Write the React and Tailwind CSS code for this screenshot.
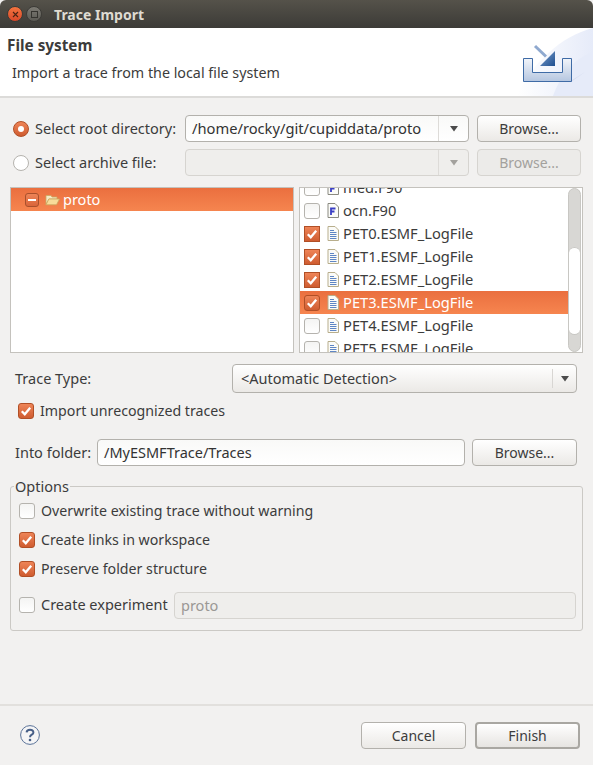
import React from 'react'

const FONT = { fontFamily: '"Noto Sans", sans-serif' }

function Tick() {
    return (
        <svg viewBox="0 0 16 16" className="w-4 h-4">
            <path d="M3.2 8.2 L6.6 11.8 L12.8 4.2" fill="none" stroke="#fff" strokeWidth="2.6" />
        </svg>
    )
}

function Check({ on, square }) {
    if (on) {
        return (
            <div className={`w-4 h-4 shrink-0 flex items-center justify-center border border-[#b14f26] bg-gradient-to-b from-[#ee8457] to-[#cf5c30] ${square ? 'rounded-none' : 'rounded-[3px]'}`}>
                <Tick />
            </div>
        )
    }
    return <div className="w-4 h-4 shrink-0 rounded-[3px] border border-[#b5b3ae] bg-gradient-to-b from-[#f4f4f3] to-white" />
}

function Radio({ on }) {
    if (on) {
        return (
            <div className="w-4 h-4 shrink-0 rounded-full border border-[#b14f26] bg-gradient-to-b from-[#ee8457] to-[#cf5c30] flex items-center justify-center">
                <div className="w-[6px] h-[6px] rounded-full bg-white" />
            </div>
        )
    }
    return <div className="w-4 h-4 shrink-0 rounded-full border border-[#b5b3ae] bg-white" />
}

function Btn({ w, disabled, focus, children }) {
    let cls = 'border-[#b3b1ac] bg-gradient-to-b from-white to-[#ebe9e6] text-[#3c3c3c]'
    if (disabled) cls = 'border-[#d6d4d0] bg-[#ecebe9] text-[#a3a19d]'
    if (focus) cls = 'border-2 border-[#a9a7a2] bg-gradient-to-b from-white to-[#e6e4e1] text-[#3c3c3c]'
    return (
        <div className={`h-[27px] shrink-0 flex items-center justify-center rounded-[4px] border text-[14px] ${cls} ${w}`}>
            {children}
        </div>
    )
}

function Arrow({ dim }) {
    return (
        <svg width="10" height="6" viewBox="0 0 10 6">
            <path d="M1 0 H9 L5 5.5 Z" fill={dim ? '#a3a19d' : '#4c4c4c'} />
        </svg>
    )
}

function DocIcon() {
    return (
        <svg width="12" height="15" viewBox="0 0 12 15" className="shrink-0">
            <path d="M1 .5 H8 L11.5 4 V14.5 H1 Z" fill="#fbfbf8" stroke="#b8ae8c" />
            <path d="M3 4.5 H7 M3 6.5 H9.5 M3 8.5 H9.5 M3 10.5 H9.5 M3 12.5 H9.5" stroke="#5f86c4" />
        </svg>
    )
}

function FortranIcon() {
    return (
        <svg width="12" height="15" viewBox="0 0 12 15" className="shrink-0">
            <path d="M1 .5 H8 L11.5 4 V14.5 H1 Z" fill="#fbfbf8" stroke="#8a8a80" />
            <path d="M4 12 V5.5 H8.5 M4 8.5 H7.5" fill="none" stroke="#3a3fc4" strokeWidth="1.8" />
        </svg>
    )
}

function FileRow({ name, icon, on, selected }) {
    return (
        <div className={`h-[23px] shrink-0 flex items-center pl-1 text-[14.7px] ${selected ? 'bg-gradient-to-b from-[#ea6f3f] to-[#f6854f] text-white' : 'text-[#3c3c3c]'}`}>
            <Check on={on} square={on && !selected} />
            <div className="w-[23px] flex justify-center ml-[1px]">
                {icon === 'f' ? <FortranIcon /> : <DocIcon />}
            </div>
            <span className="-ml-[1px]">{name}</span>
        </div>
    )
}

function Option({ on, children, className }) {
    return (
        <div className={`flex items-center gap-[6px] text-[14.2px] ${className}`}>
            <Check on={on} />
            <span>{children}</span>
        </div>
    )
}

export default function App() {
    return (
        <div style={FONT} className="w-[593px] h-[765px] flex flex-col overflow-hidden bg-[#f2f1f0] text-[14.5px] text-[#3c3c3c]">
            {/* window title */}
            <div className="h-[28px] shrink-0 flex items-center rounded-t-[6px] bg-gradient-to-b from-[#55524a] to-[#3c3b37]">
                <div className="ml-[7px] w-4 h-4 rounded-full bg-gradient-to-b from-[#f4743f] to-[#d9482a] border border-[#3c3b37] flex items-center justify-center">
                    <svg width="7" height="7" viewBox="0 0 7 7"><path d="M1 1 L6 6 M6 1 L1 6" stroke="#4a2414" strokeWidth="1.1" /></svg>
                </div>
                <div className="ml-[3px] w-4 h-4 rounded-full bg-gradient-to-b from-[#7d7b74] to-[#5b5a54] border border-[#3c3b37] flex items-center justify-center">
                    <div className="w-[7px] h-[7px] border border-[#35342f]" />
                </div>
                <span className="ml-[12px] text-[14px] font-bold text-[#dfdbd2]">Trace Import</span>
            </div>

            {/* wizard banner */}
            <div className="relative h-[70px] shrink-0 bg-white border-b-2 border-[#dcdbd9] pl-[7px] pt-[8px]">
                <div className="text-[15.3px] font-bold leading-[19px]">File system</div>
                <div className="ml-[5px] mt-[8px] text-[14.3px] leading-[19px]">Import a trace from the local file system</div>
                <svg width="80" height="68" viewBox="0 0 80 68" className="absolute right-0 top-0">
                    <defs>
                        <linearGradient id="tray" x1="0" y1="0" x2="0" y2="1">
                            <stop offset="0" stopColor="#f2f5fa" />
                            <stop offset="1" stopColor="#b5c6e0" />
                        </linearGradient>
                        <linearGradient id="tip" x1="0" y1="0" x2="1" y2="1">
                            <stop offset="0" stopColor="#7ea2cf" />
                            <stop offset="1" stopColor="#1f4f8f" />
                        </linearGradient>
                        <linearGradient id="swoosh" x1="0" y1="0" x2="1" y2="0">
                            <stop offset="0" stopColor="#ffffff" />
                            <stop offset="1" stopColor="#e6ebf9" />
                        </linearGradient>
                    </defs>
                    <path d="M4 68 C18 36 48 8 80 0 V68 Z" fill="url(#swoosh)" />
                    <path d="M40 68 C48 46 62 30 80 24 V68 Z" fill="#e6ebf9" />
                    <path d="M56 54 L72 44 L58 54 Z" fill="#d5dbee" />
                    <path d="M10.5 30.5 H19.5 V44.5 H49.5 V30.5 H58.5 V53.5 H10.5 Z" fill="url(#tray)" stroke="#3f6ba6" />
                    <path d="M22 18 L33 28.5" stroke="#8fa9cf" strokeWidth="3" />
                    <path d="M42 23 V38 H27 Z" fill="url(#tip)" />
                </svg>
            </div>

            {/* source selection */}
            <div className="flex items-center mt-[17px] h-[27px] pl-[13px] pr-[12px]">
                <Radio on />
                <span className="ml-[6px]">Select root directory:</span>
                <div className="ml-auto w-[284px] h-[27px] flex items-center rounded-[4px] border border-[#b3b1ac] bg-gradient-to-b from-[#f9f9f8] to-white">
                    <span className="flex-1 pl-[6px] text-[14.7px] text-[#333]">/home/rocky/git/cupiddata/proto</span>
                    <div className="w-[30px] h-full border-l border-[#dddbd8] flex items-center justify-center"><Arrow /></div>
                </div>
                <div className="ml-[8px]"><Btn w="w-[104px]">Browse...</Btn></div>
            </div>
            <div className="flex items-center mt-[7px] h-[27px] pl-[13px] pr-[12px]">
                <Radio />
                <span className="ml-[6px]">Select archive file:</span>
                <div className="ml-auto w-[284px] h-[27px] flex items-center rounded-[4px] border border-[#d6d4d0] bg-[#efeeec]">
                    <span className="flex-1" />
                    <div className="w-[30px] h-full border-l border-[#dddbd8] flex items-center justify-center"><Arrow dim /></div>
                </div>
                <div className="ml-[8px]"><Btn w="w-[104px]" disabled>Browse...</Btn></div>
            </div>

            {/* tree and file list */}
            <div className="flex mt-[11px] h-[166px] pl-[10px] pr-[10px] gap-[5px]">
                <div className="w-[284px] border border-[#c4c2bd] bg-white">
                    <div className="h-[23px] flex items-center pl-[14px] bg-gradient-to-b from-[#ea6f3f] to-[#f6854f] text-white">
                        <div className="w-[14px] h-[14px] rounded-[3px] border border-[#a9502c] bg-gradient-to-b from-[#ee8457] to-[#d9653a] flex items-center justify-center">
                            <div className="w-[8px] h-[2px] bg-white" />
                        </div>
                        <svg width="15" height="12" viewBox="0 0 15 12" className="ml-[6px]">
                            <path d="M1 1.5 H6 L7 3 H12 V5 H4 L1 10.5 Z" fill="#f5e9c4" stroke="#c9a860" strokeWidth=".8" />
                            <path d="M3.8 5 H14.5 L11.5 10.8 H1 Z" fill="#f8dc9a" stroke="#c9a860" strokeWidth=".8" />
                        </svg>
                        <span className="ml-[3px]">proto</span>
                    </div>
                </div>
                <div className="flex-1 flex border border-[#c4c2bd] bg-white overflow-hidden">
                    <div className="flex-1 flex flex-col -mt-[12px]">
                        <FileRow name="med.F90" icon="f" />
                        <FileRow name="ocn.F90" icon="f" />
                        <FileRow name="PET0.ESMF_LogFile" on />
                        <FileRow name="PET1.ESMF_LogFile" on />
                        <FileRow name="PET2.ESMF_LogFile" on />
                        <FileRow name="PET3.ESMF_LogFile" on selected />
                        <FileRow name="PET4.ESMF_LogFile" />
                        <FileRow name="PET5.ESMF_LogFile" />
                    </div>
                    <div className="w-[14px] shrink-0 pr-[1px]">
                        <div className="h-full rounded-full border border-[#c8c7c3] bg-[#d8d7d4] pt-[58px]">
                            <div className="h-[88px] rounded-full bg-white border-y border-[#c8c7c3]" />
                        </div>
                    </div>
                </div>
            </div>

            {/* trace type */}
            <div className="flex items-center mt-[11px] h-[29px] pl-[15px] pr-[16px]">
                <span>Trace Type:</span>
                <div className="ml-auto w-[345px] h-[29px] flex items-center rounded-[4px] border border-[#b3b1ac] bg-gradient-to-b from-white to-[#ebe9e6]">
                    <span className="flex-1 pl-[8px]">&lt;Automatic Detection&gt;</span>
                    <div className="w-[24px] h-[19px] border-l border-[#d8d6d3] flex items-center justify-center"><Arrow /></div>
                </div>
            </div>
            <Option on className="mt-[8px] ml-[18px] h-[19px]">Import unrecognized traces</Option>

            {/* destination */}
            <div className="flex items-center mt-[19px] h-[27px] pl-[15px] pr-[16px]">
                <span className="w-[76px] shrink-0 whitespace-nowrap">Into folder:</span>
                <div className="ml-[6px] w-[368px] h-[27px] flex items-center pl-[6px] rounded-[4px] border border-[#b3b1ac] bg-gradient-to-b from-[#f9f9f8] to-white text-[#333]">/MyESMFTrace/Traces</div>
                <div className="ml-auto"><Btn w="w-[105px]">Browse...</Btn></div>
            </div>

            {/* options group */}
            <fieldset className="mt-[11px] mx-[10px] h-[154px] border border-[#cbc9c5] rounded-[3px] pl-[8px] pr-[6px] min-w-0">
                <legend className="-ml-[5px] pl-[1px] pr-[1px] leading-[19px]">Options</legend>
                <Option className="mt-[5px] h-[19px]">Overwrite existing trace without warning</Option>
                <Option on className="mt-[10px] h-[19px]">Create links in workspace</Option>
                <Option on className="mt-[10px] h-[19px]">Preserve folder structure</Option>
                <div className="flex items-center mt-[14px] h-[27px]">
                    <div className="flex items-center pb-[2px]">
                        <Check />
                        <span className="ml-[6px]">Create experiment</span>
                    </div>
                    <div className="ml-auto w-[402px] h-[27px] flex items-center pl-[6px] rounded-[4px] border border-[#d6d4d0] bg-[#efeeec] text-[#9a9895]">proto</div>
                </div>
            </fieldset>

            {/* footer */}
            <div className="mt-auto h-[61px] shrink-0 border-t-2 border-[#e2e0dd] flex items-center pl-[20px] pr-[13px]">
                <svg width="20" height="20" viewBox="0 0 20 20" className="mt-[-1px]">
                    <circle cx="10" cy="10" r="9.4" fill="#f5f5f6" stroke="#5a7298" />
                    <path d="M6.6 7.4 C6.8 3.9 13.4 3.8 13.4 7.4 C13.4 9.8 10 9.6 10 12.2" fill="none" stroke="#475f88" strokeWidth="2" />
                    <circle cx="10" cy="15" r="1.3" fill="#475f88" />
                </svg>
                <div className="ml-auto"><Btn w="w-[105px]">Cancel</Btn></div>
                <div className="ml-[9px]"><Btn w="w-[105px]" focus>Finish</Btn></div>
            </div>
        </div>
    )
}
